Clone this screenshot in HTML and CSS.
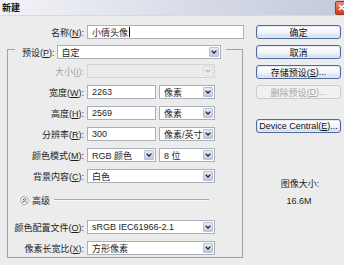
FILE: index.html
```html
<!DOCTYPE html>
<html>
<head>
<meta charset="utf-8">
<link rel="stylesheet" href="styles.css">
</head>
<body>
<div class="titlebar">
  <span class="title">新建</span>
  <span class="close"><svg width="7" height="7" viewBox="0 0 7 7"><path d="M1 1 L6 6 M6 1 L1 6" stroke="#fff" stroke-width="1.6"/></svg></span>
</div>
<div class="main">
  <div class="left">
    <div class="row">
      <span class="lbl">名称(<u>N</u>):</span>
      <div class="field name-field">小倩头像<span class="caret"></span></div>
    </div>
    <fieldset class="group">
      <legend class="preset">
        <span class="plbl">预设(<u>P</u>):</span>
        <div class="field select preset-select"><span class="val">自定</span><span class="arrow"><svg width="6" height="4" viewBox="0 0 6 4"><path d="M0.6 0.6 L3 3 L5.4 0.6" fill="none" stroke="#222" stroke-width="1.3"/></svg></span></div>
      </legend>
      <div class="row first disabled">
        <span class="lbl">大小(<u>I</u>):</span>
        <div class="field select wide off"><span class="val"></span><span class="arrow"><svg width="6" height="4" viewBox="0 0 6 4"><path d="M0.6 0.6 L3 3 L5.4 0.6" fill="none" stroke="#b5b5b5" stroke-width="1.3"/></svg></span></div>
      </div>
      <div class="row">
        <span class="lbl">宽度(<u>W</u>):</span>
        <div class="field small">2263</div>
        <div class="field select unit"><span class="val">像素</span><span class="arrow"><svg width="6" height="4" viewBox="0 0 6 4"><path d="M0.6 0.6 L3 3 L5.4 0.6" fill="none" stroke="#222" stroke-width="1.3"/></svg></span></div>
      </div>
      <div class="row">
        <span class="lbl">高度(<u>H</u>):</span>
        <div class="field small">2569</div>
        <div class="field select unit"><span class="val">像素</span><span class="arrow"><svg width="6" height="4" viewBox="0 0 6 4"><path d="M0.6 0.6 L3 3 L5.4 0.6" fill="none" stroke="#222" stroke-width="1.3"/></svg></span></div>
      </div>
      <div class="row">
        <span class="lbl">分辨率(<u>R</u>):</span>
        <div class="field small">300</div>
        <div class="field select unit"><span class="val">像素/英寸</span><span class="arrow"><svg width="6" height="4" viewBox="0 0 6 4"><path d="M0.6 0.6 L3 3 L5.4 0.6" fill="none" stroke="#222" stroke-width="1.3"/></svg></span></div>
      </div>
      <div class="row">
        <span class="lbl">颜色模式(<u>M</u>):</span>
        <div class="field select small"><span class="val">RGB 颜色</span><span class="arrow"><svg width="6" height="4" viewBox="0 0 6 4"><path d="M0.6 0.6 L3 3 L5.4 0.6" fill="none" stroke="#222" stroke-width="1.3"/></svg></span></div>
        <div class="field select unit"><span class="val">8 位</span><span class="arrow"><svg width="6" height="4" viewBox="0 0 6 4"><path d="M0.6 0.6 L3 3 L5.4 0.6" fill="none" stroke="#222" stroke-width="1.3"/></svg></span></div>
      </div>
      <div class="row">
        <span class="lbl">背景内容(<u>C</u>):</span>
        <div class="field select wide"><span class="val">白色</span><span class="arrow"><svg width="6" height="4" viewBox="0 0 6 4"><path d="M0.6 0.6 L3 3 L5.4 0.6" fill="none" stroke="#222" stroke-width="1.3"/></svg></span></div>
      </div>
      <div class="adv">
        <svg class="adv-icon" width="9" height="9" viewBox="0 0 9 9"><circle cx="4.5" cy="4.5" r="4" fill="#f6f6f6" stroke="#9a9a9a" stroke-width="0.8"/><path d="M2.6 4.2 L4.5 2.5 L6.4 4.2 M2.6 6.4 L4.5 4.7 L6.4 6.4" fill="none" stroke="#333" stroke-width="0.9"/></svg>
        <span class="adv-text">高级</span>
        <span class="adv-line"></span>
      </div>
      <div class="row profile">
        <span class="lbl">颜色配置文件(<u>O</u>):</span>
        <div class="field select wide"><span class="val">sRGB IEC61966-2.1</span><span class="arrow"><svg width="6" height="4" viewBox="0 0 6 4"><path d="M0.6 0.6 L3 3 L5.4 0.6" fill="none" stroke="#222" stroke-width="1.3"/></svg></span></div>
      </div>
      <div class="row">
        <span class="lbl">像素长宽比(<u>X</u>):</span>
        <div class="field select wide"><span class="val">方形像素</span><span class="arrow"><svg width="6" height="4" viewBox="0 0 6 4"><path d="M0.6 0.6 L3 3 L5.4 0.6" fill="none" stroke="#222" stroke-width="1.3"/></svg></span></div>
      </div>
    </fieldset>
  </div>
  <div class="right">
    <div class="btn">确定</div>
    <div class="btn">取消</div>
    <div class="btn">存储预设(<u>S</u>)...</div>
    <div class="btn off">删除预设(<u>D</u>)...</div>
    <div class="btn central">Device Central(<u>E</u>)...</div>
    <div class="size-label">图像大小:</div>
    <div class="size-value">16.6M</div>
  </div>
</div>
</body>
</html>
```

FILE: styles.css
```css
* {
  box-sizing: border-box;
}

html, body {
  margin: 0;
  padding: 0;
}

body {
  width: 344px;
  height: 265px;
  overflow: hidden;
  background: #ececec;
  font-family: "Liberation Sans", "Noto Sans CJK SC", sans-serif;
  font-size: 9px;
  color: #1e1e1e;
}

u {
  text-decoration: underline;
}

.titlebar {
  height: 16px;
  display: flex;
  align-items: center;
  justify-content: space-between;
  padding-left: 2px;
  background: linear-gradient(to right, #f2f3f7, #dde0ea 45%, #c3c9dc);
  border-bottom: 1px solid #d6d9e2;
}

.title {
  font-weight: bold;
  font-size: 9px;
  color: #111;
}

.close {
  width: 12px;
  height: 14px;
  margin-right: -3px;
  background: linear-gradient(#ee8a70, #cf3a1f);
  border: 1px solid #a3331d;
  border-radius: 2px;
  display: flex;
  align-items: center;
  justify-content: center;
}

.main {
  display: flex;
  gap: 12px;
  padding-top: 9px;
}

.left {
  width: 244px;
  flex: none;
}

.right {
  width: 85px;
  flex: none;
  display: flex;
  flex-direction: column;
}

.row {
  display: flex;
  align-items: center;
  height: 14px;
  margin-top: 7px;
}

.left > .row {
  margin-top: 0;
}

.lbl {
  width: 84px;
  margin-right: 3px;
  text-align: right;
  white-space: nowrap;
}

.group .lbl {
  width: 76px;
}

.field {
  height: 14px;
  border: 1px solid #a9b0bb;
  background: #fff;
  display: flex;
  align-items: center;
  padding-left: 4px;
  white-space: nowrap;
}

.name-field {
  width: 157px;
}

.caret {
  display: inline-block;
  width: 1px;
  height: 10px;
  background: #000;
  margin-left: 1px;
}

.group {
  margin: 0 0 0 7px;
  padding: 5px 0 2px 0;
  width: 236px;
  min-width: 0;
  border: 1px solid #a2a2a2;
}

.preset {
  display: flex;
  align-items: center;
  margin-left: 7px;
  padding: 6px 5px 0 7px;
}

.plbl {
  margin-right: 2px;
  white-space: nowrap;
}

.preset-select {
  width: 164px;
}

.row.first {
  margin-top: 0;
}

.select {
  justify-content: space-between;
  padding-right: 1px;
}

.select .val {
  overflow: hidden;
}

.arrow {
  width: 10px;
  height: 10px;
  border-radius: 1px;
  background: linear-gradient(#e6ebf5, #c0cadf);
  border: 1px solid #b7c2d8;
  display: flex;
  align-items: center;
  justify-content: center;
  flex: none;
}

.wide {
  width: 128px;
}

.small {
  width: 69px;
  margin-right: 3px;
}

.unit {
  width: 56px;
}

.disabled .lbl {
  color: #a6a6a6;
}

.field.off {
  background: #ececec;
  border-color: #d2d4d8;
}

.field.off .arrow {
  background: #eeeeee;
  border-color: #dcdcdc;
}

.adv {
  display: flex;
  align-items: center;
  height: 10px;
  margin-top: 12px;
  padding-left: 12px;
  padding-right: 33px;
}

.adv-icon {
  flex: none;
}

.adv-text {
  margin-left: 3px;
}

.adv-line {
  flex: 1;
  height: 2px;
  margin-left: 4px;
  border-top: 1px solid #a6a6a6;
  border-bottom: 1px solid #fafafa;
}

.row.profile {
  margin-top: 15px;
}

.btn {
  height: 14px;
  margin-bottom: 6px;
  border: 1px solid #4e6a98;
  border-radius: 3px;
  background: linear-gradient(#ffffff 0%, #f1f4fa 55%, #cdd8ec 100%);
  box-shadow: inset 0 0 0 1px #e2e9f6;
  display: flex;
  align-items: center;
  justify-content: center;
  white-space: nowrap;
  color: #111;
}

.btn.off {
  border-color: #c9ccd2;
  background: #f1f1f1;
  box-shadow: none;
  color: #a8a8a8;
}

.btn.central {
  margin-top: 14px;
}

.size-label {
  margin-top: 39px;
  text-align: center;
  line-height: 12px;
  padding-left: 3px;
}

.size-value {
  margin-top: 5px;
  text-align: center;
  line-height: 12px;
  padding-left: 1px;
}
```
